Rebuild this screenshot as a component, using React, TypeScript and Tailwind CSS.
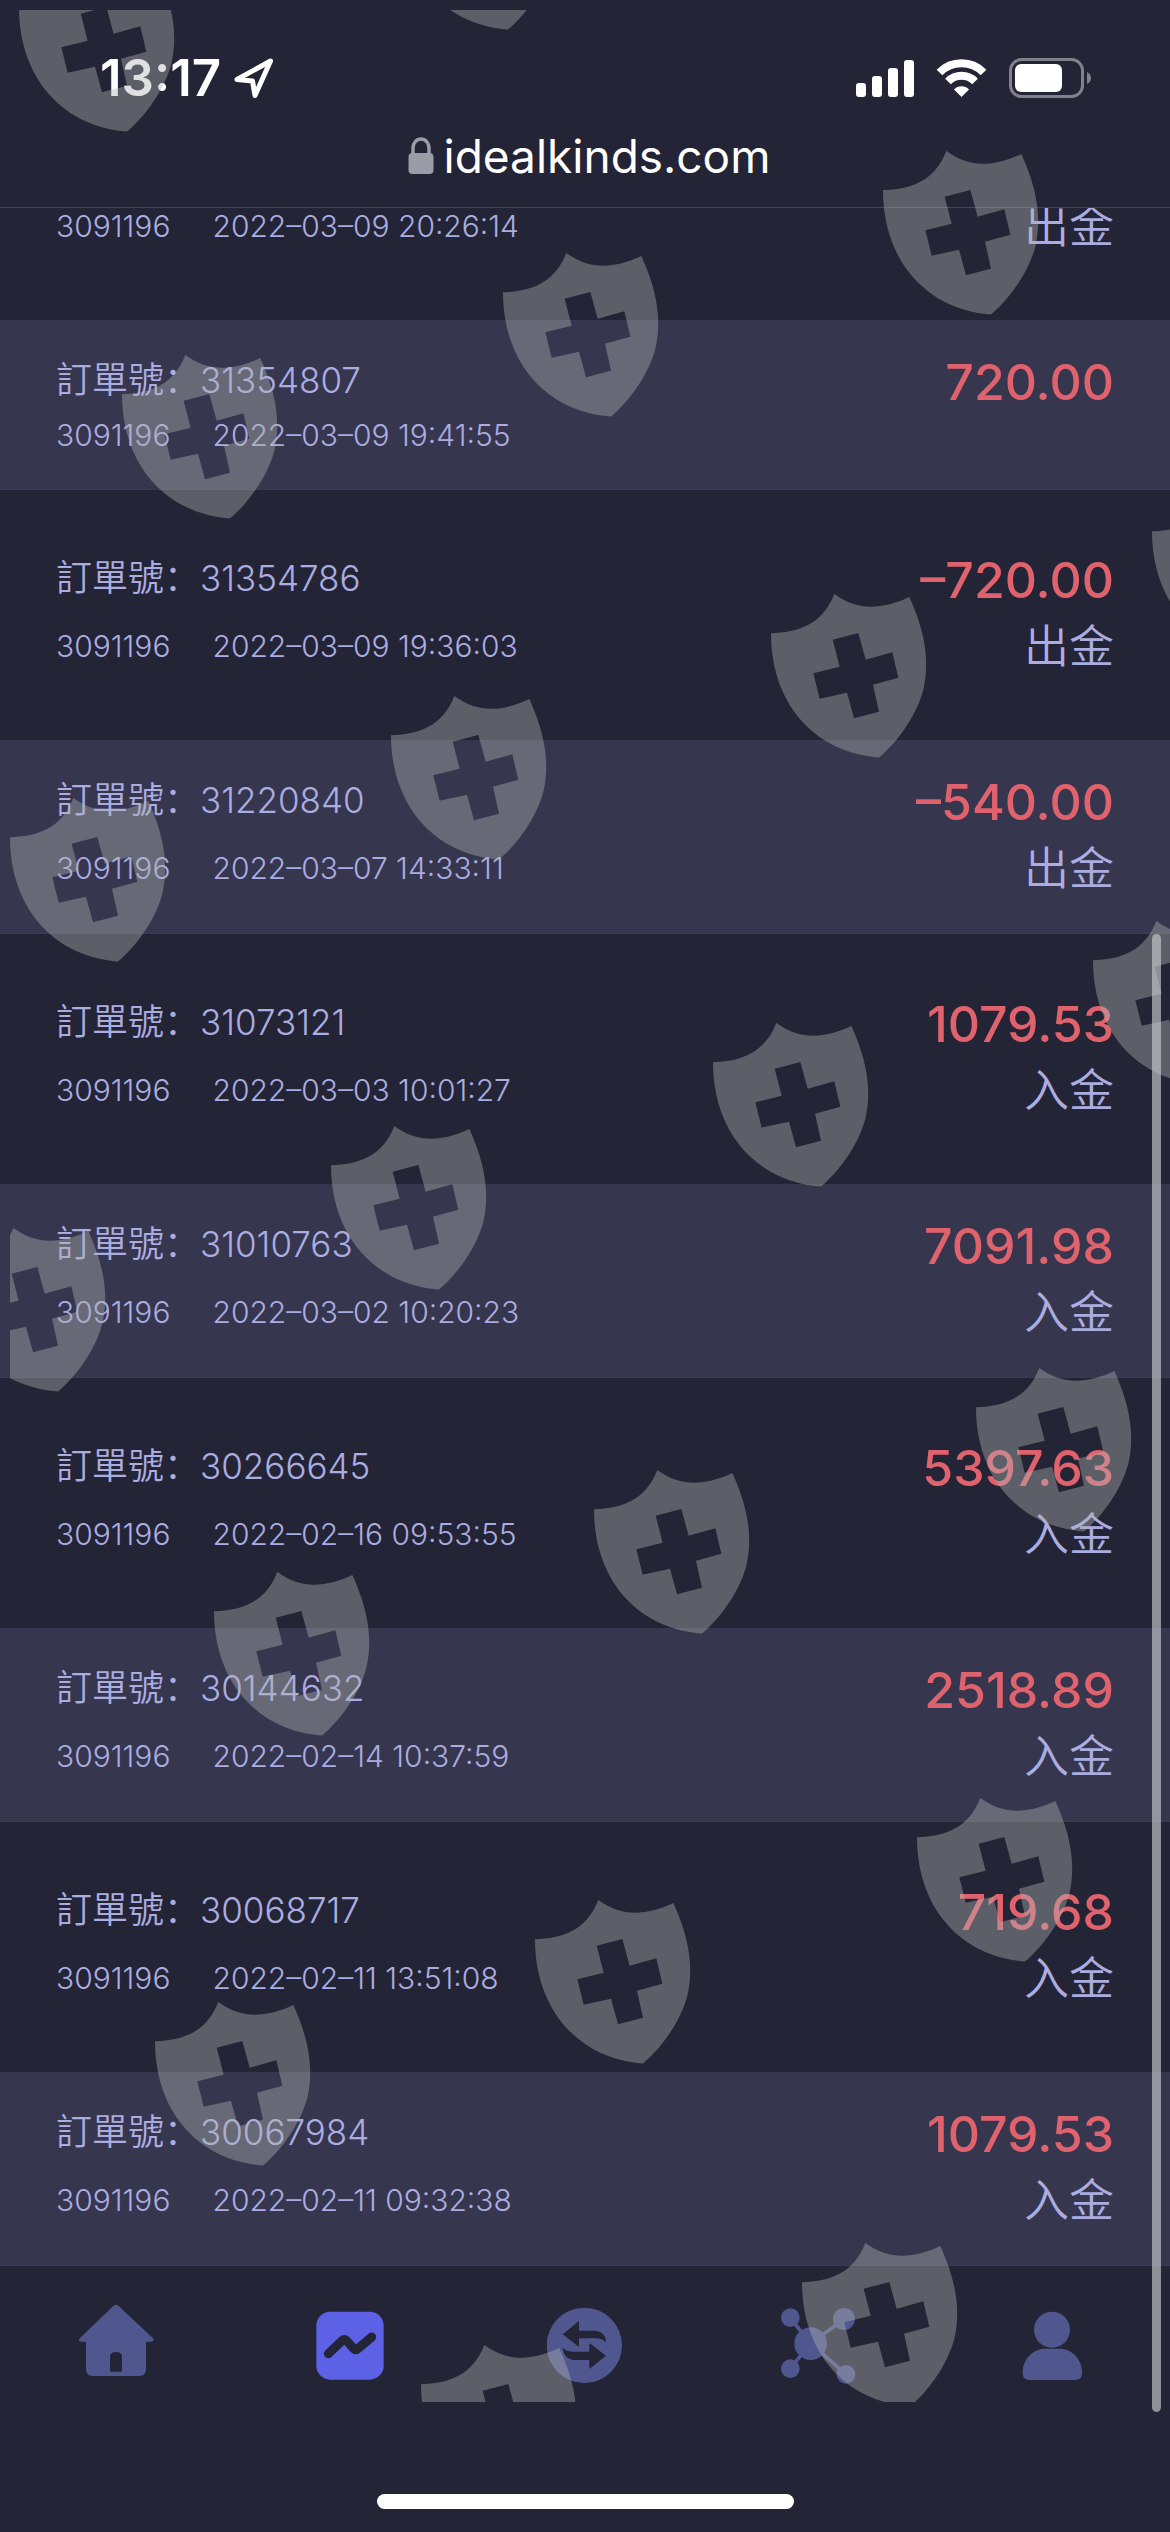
import React from "react";

type Order = {
  order?: string;
  account: string;
  time: string;
  amount?: string;
  kind?: string;
};

const orders: Order[] = [
  { account: "3091196", time: "2022–03–09 20:26:14", kind: "出金" },
  { order: "31354807", account: "3091196", time: "2022–03–09 19:41:55", amount: "720.00" },
  { order: "31354786", account: "3091196", time: "2022–03–09 19:36:03", amount: "–720.00", kind: "出金" },
  { order: "31220840", account: "3091196", time: "2022–03–07 14:33:11", amount: "–540.00", kind: "出金" },
  { order: "31073121", account: "3091196", time: "2022–03–03 10:01:27", amount: "1079.53", kind: "入金" },
  { order: "31010763", account: "3091196", time: "2022–03–02 10:20:23", amount: "7091.98", kind: "入金" },
  { order: "30266645", account: "3091196", time: "2022–02–16 09:53:55", amount: "5397.63", kind: "入金" },
  { order: "30144632", account: "3091196", time: "2022–02–14 10:37:59", amount: "2518.89", kind: "入金" },
  { order: "30068717", account: "3091196", time: "2022–02–11 13:51:08", amount: "719.68", kind: "入金" },
  { order: "30067984", account: "3091196", time: "2022–02–11 09:32:38", amount: "1079.53", kind: "入金" },
];

/* Watermark stamps, as offsets inside the overlay. */
const stamps: [number, number][] = [
  [9, -42], [390, -144], [873, 141], [493, 243], [112, 345],
  [1142, 482], [761, 584], [381, 686], [0, 788],
  [1083, 911], [703, 1013], [321, 1116], [-60, 1218],
  [966, 1358], [584, 1460], [204, 1562],
  [907, 1788], [525, 1890], [145, 1992],
  [792, 2233], [411, 2335],
];

function StatusBar() {
  return (
    <div className="flex h-[116px] items-end justify-between pb-[12px] pl-[100px] pr-[78px]">
      <div className="flex items-center gap-3">
        <span className="text-[51px] font-semibold leading-[52px]">13:17</span>
        <svg className="h-[42px] w-[42px]" viewBox="0 0 42 42" aria-label="定位" role="img">
          <path d="M37.500 4 L4 22.500 L19.500 24 L22 38.500 Z" fill="none" stroke="white" strokeWidth="5" strokeLinejoin="round" />
        </svg>
      </div>
      <div className="flex h-[52px] items-center gap-[22px]">
        <svg className="h-[38px] w-[58px]" viewBox="0 0 58 38" fill="white" aria-label="訊號" role="img">
          <rect x="0" y="24" width="10" height="14" rx="3" />
          <rect x="16" y="17" width="10" height="21" rx="3" />
          <rect x="32" y="9" width="10" height="29" rx="3" />
          <rect x="48" y="1" width="10" height="37" rx="3" />
        </svg>
        <svg className="h-[38px] w-[51px]" viewBox="0 0 51 38" fill="none" aria-label="Wi-Fi" role="img">
          <path d="M3.500 13.500 A31 31 0 0 1 47.500 13.500" stroke="white" strokeWidth="8" />
          <path d="M12 22.500 A19 19 0 0 1 39 22.500" stroke="white" strokeWidth="8" />
          <path d="M25.500 38 L18 30.500 A10.500 10.500 0 0 1 33 30.500 Z" fill="white" />
        </svg>
        <svg className="h-[40px] w-[83px]" viewBox="0 0 83 40" aria-label="電池" role="img">
          <rect x="1.500" y="1.500" width="72" height="37" rx="11" fill="none" stroke="#818289" strokeWidth="3" />
          <rect x="6" y="6" width="47" height="28" rx="6" fill="white" />
          <path d="M78 14 Q82 16 82 20 Q82 24 78 26 Z" fill="#818289" />
        </svg>
      </div>
    </div>
  );
}

function OrderRow({ item, alt }: { item: Order; alt: boolean }) {
  const tone = alt ? "bg-[#36364f] border-[#3a3b50] pt-[26px]" : "bg-[#232435] border-[#232435]";
  const space = alt
    ? item.kind ? "pb-[31px]" : "pb-[33px]"
    : item.order ? "pt-[54px] pb-[59px]" : "pb-[75px]";
  const second = !item.order ? "h-[36px]" : item.kind ? "h-[68px]" : "h-[42px]";
  return (
    <li className={`overflow-hidden border-b px-[56px] ${tone} ${space}`}>
      {item.order && (
        <div className="flex h-[68px] items-center justify-between">
          <p className="flex items-center">
            <span className="text-[36px] font-[350]">訂單號：</span>
            <span className="text-[35px] font-[350]">{item.order}</span>
          </p>
          <strong className="pt-[4px] text-[50px] font-medium text-[#e0626d]">{item.amount}</strong>
        </div>
      )}
      <div className={`flex items-center justify-between ${second}`}>
        <p className="flex gap-[42px] text-[30px] font-[350]">
          <span>{item.account}</span>
          <time>{item.time}</time>
        </p>
        {item.kind && <span className="text-[45px] font-[350]">{item.kind}</span>}
      </div>
    </li>
  );
}

function NavButton({ label, active, children }: { label: string; active?: boolean; children: React.ReactNode }) {
  return (
    <button
      type="button"
      aria-label={label}
      aria-current={active ? "page" : undefined}
      className={`flex items-center justify-center ${active ? "text-[#5c61e6]" : "text-[#50578f]"}`}
    >
      <svg className="h-[80px] w-[76px]" viewBox="0 0 228 240" fill="currentColor">
        {children}
      </svg>
    </button>
  );
}

function Watermark() {
  return (
    <svg className="pointer-events-none absolute left-[10px] top-[10px] h-[2392px] w-[calc(100%-10px)] overflow-hidden" aria-hidden="true">
      <defs>
        <path
          id="shield"
          fillRule="evenodd"
          transform="scale(0.33333)"
          d="M0 118 C82 115 154 92 190 0 C262 52 332 47 415 9 C462 112 477 202 457 287 C440 352 392 432 325 490 Q318 491 307 489 C122 467 0 322 0 118 Z M185 137 L206 218 L127 238 L146 314 L228 296 L249 373 L324 353 L306 272 L382 251 L364 175 L284 197 L262 117 Z"
        />
      </defs>
      <g fill="#b2b4b2" fillOpacity="0.41">
        {stamps.map(([x, y]) => (
          <use key={`${x},${y}`} href="#shield" x={x} y={y} />
        ))}
      </g>
    </svg>
  );
}

export default function App() {
  return (
    <div className="relative min-h-screen overflow-hidden bg-[#232435] font-[Inter,'Noto_Sans_CJK_SC',sans-serif] leading-none text-[#abade0]">
      <header className="border-b border-[#45465a] text-white">
        <StatusBar />
        <div className="flex h-[91px] items-center justify-center gap-[10px] pb-[12px] pl-[8px]">
          <svg className="h-[38px] w-[26px]" viewBox="0 0 26 38" aria-label="安全連線" role="img">
            <path d="M5 18 V11 A8 9 0 0 1 21 11 V18" fill="none" stroke="#9b9ca8" strokeWidth="3.500" />
            <rect x="0.500" y="16" width="25" height="21" rx="4" fill="#9b9ca8" />
          </svg>
          <span className="text-[46px] leading-[56px]">idealkinds.com</span>
        </div>
      </header>
      <main>
        <ul>
          {orders.map((item, i) => (
            <OrderRow key={item.time} item={item} alt={i % 2 === 1} />
          ))}
        </ul>
      </main>
      <nav className="grid h-[156px] grid-cols-5">
        <NavButton label="首頁">
          <path
            fillRule="evenodd"
            d="M103 6 Q111 -1 119 6 L222 103 Q228 113 216 113 H201 V196 Q201 216 181 216 H41 Q21 216 21 196 V113 H7 Q-4 113 2 103 Z M93 203 H129 V158 Q129 144 111 144 Q93 144 93 158 Z"
          />
        </NavButton>
        <NavButton label="行情" active>
          <rect x="10" y="23" width="202" height="204" rx="42" />
          <path d="M46 149 L87 110 Q94 104 101 110 L121 133 Q128 140 136 133 L176 99" fill="none" stroke="#232435" strokeWidth="27" strokeLinecap="round" strokeLinejoin="round" />
        </NavButton>
        <NavButton label="交易">
          <circle cx="112" cy="124" r="113" />
          <g fill="#232435">
            <path d="M47 91 L96 51 V80 H140 C163 80 177 92 177 116 C168 106 160 103 140 103 H96 V129 Z" />
            <path d="M177 155 L127 117 V143 H85 C65 143 56 139 47 131 C49 155 65 168 85 168 H127 V195 Z" />
          </g>
        </NavButton>
        <NavButton label="網絡">
          <path d="M27 41 L89 119 L189 45 M27 194 L89 119 L195 211" fill="none" stroke="currentColor" strokeWidth="11" />
          <circle cx="28" cy="41" r="28" />
          <circle cx="189" cy="45" r="33" />
          <circle cx="89" cy="119" r="49" />
          <circle cx="28" cy="194" r="28" />
          <circle cx="195" cy="211" r="28" />
        </NavButton>
        <NavButton label="我的">
          <circle cx="111" cy="77" r="54" />
          <path d="M23 205 C23 165 55 134 90 134 H134 C170 134 201 165 201 205 C201 222 195 228 178 228 H46 C29 228 23 222 23 205 Z" />
        </NavButton>
      </nav>
      <div className="flex h-[111px] justify-center pt-[72px]">
        <div className="h-[15px] w-[417px] rounded-full bg-white" />
      </div>
      <Watermark />
      <div className="absolute right-[9px] top-[934px] h-[1478px] w-[9px] rounded-full bg-[#c8c9cc]/65" />
    </div>
  );
}
